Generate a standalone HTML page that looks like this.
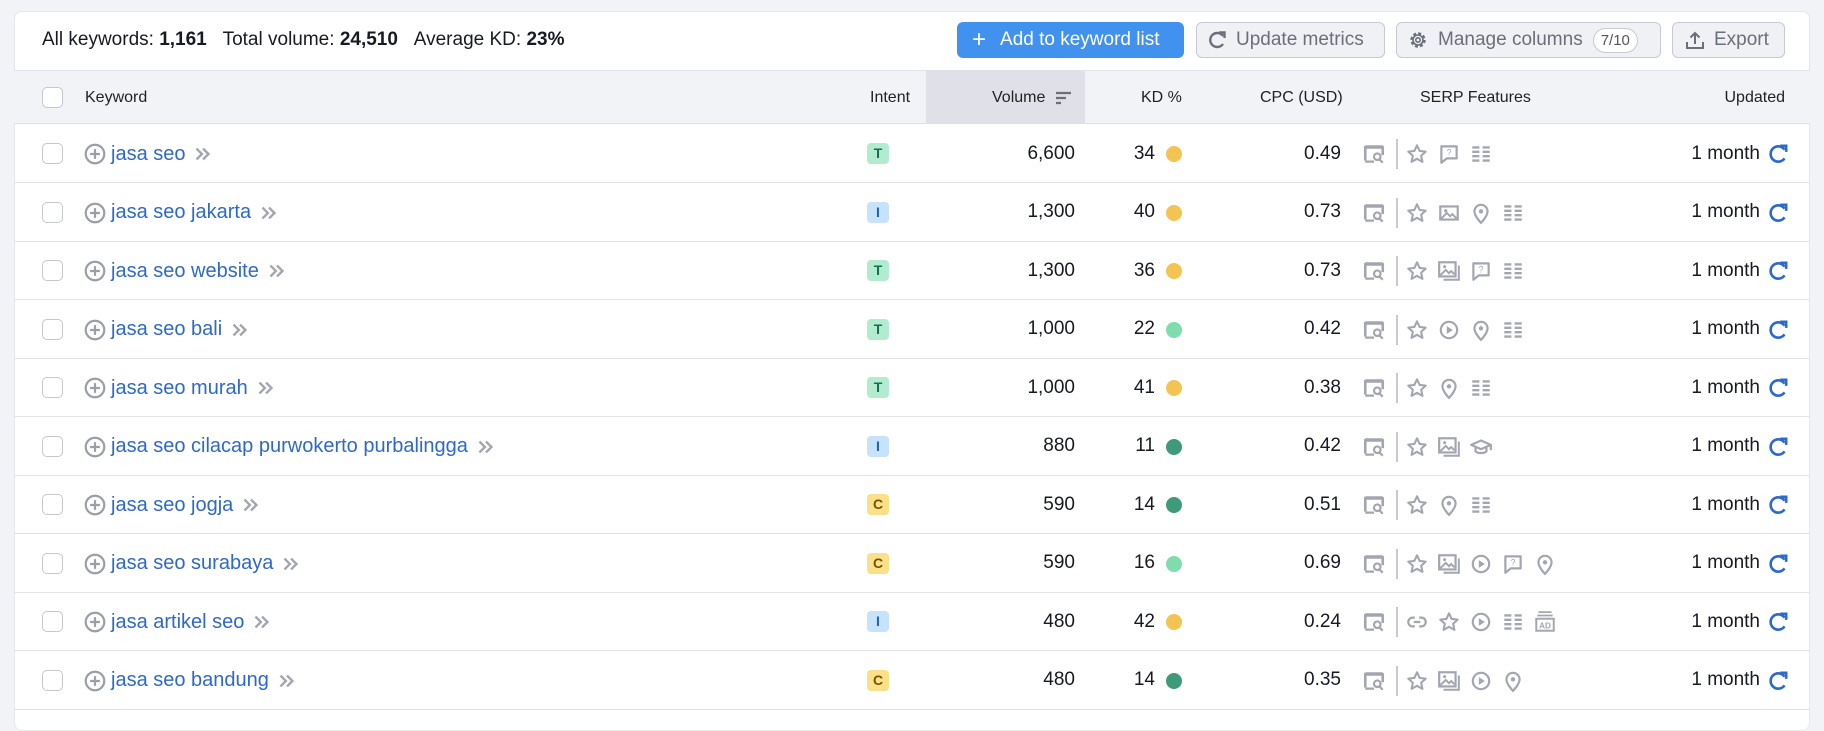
<!DOCTYPE html>
<html><head><meta charset="utf-8"><style>
*{box-sizing:border-box;margin:0;padding:0}
body{width:1824px;height:724px;background:#f2f3f7;font-family:"Liberation Sans",Arial,sans-serif;color:#171a22;position:relative;overflow:hidden}
.card{position:absolute;left:14px;top:11px;width:1796px;height:720px;background:#fff;border-radius:8px;border:1px solid #e6e7ee}
.a{position:absolute;white-space:nowrap}
.tb{top:29px;font-size:19px;left:42px}
.btn{position:absolute;top:22px;height:36px;border:1px solid #c8cad2;border-radius:6px;background:#f0f1f4;color:#6c6e79;font-size:19px;display:flex;align-items:center}
.hdr{position:absolute;left:14px;top:70px;width:1796px;height:54px;background:#f2f3f7;border-top:1px solid #e0e2ea;border-bottom:1px solid #dedfe8}
.hc{position:absolute;top:89px;font-size:16px;color:#222}
.cb{position:absolute;width:21px;height:21px;border:1px solid #c5c7d0;border-radius:5px;background:#fff}
.row{position:absolute;left:14px;width:1796px;height:1px;background:#e2e3ea}
.kw{position:absolute;font-size:20px;color:#2d69cc;line-height:24px;white-space:nowrap}
.num{position:absolute;font-size:19px;text-align:right;line-height:24px;white-space:nowrap}
.badge{position:absolute;width:22px;height:21px;border-radius:4px;font-size:14px;font-weight:bold;text-align:center;line-height:21px}
.dot{position:absolute;width:16px;height:16px;border-radius:50%}
svg.i{position:absolute;width:24px;height:24px}
</style></head><body>
<svg width="0" height="0" style="position:absolute">
<defs>
<symbol id="sq" viewBox="0 0 22 22"><path d="M3 17V5h16v7" fill="none" stroke="#a3a6b0" stroke-width="2.4"/><path d="M3 4h16" stroke="#a3a6b0" stroke-width="2"/><circle cx="14" cy="13.5" r="3" fill="none" stroke="#a3a6b0" stroke-width="2"/><path d="M16 16l3 3M3 18h8" stroke="#a3a6b0" stroke-width="2"/></symbol>
<symbol id="star" viewBox="0 0 22 22"><path d="M11 3l2.4 5.2 5.6.6-4.2 3.8 1.2 5.6L11 15.4 6 18.2l1.2-5.6L3 8.8l5.6-.6z" fill="none" stroke="#a3a6b0" stroke-width="1.9" stroke-linejoin="round"/></symbol>
<symbol id="qa" viewBox="0 0 22 22"><path d="M4 4h14v11H9l-5 4z" fill="none" stroke="#a3a6b0" stroke-width="2" stroke-linejoin="round"/><text x="11" y="12.5" font-size="8" text-anchor="middle" fill="#a3a6b0" font-family="Liberation Sans">?</text></symbol>
<symbol id="list" viewBox="0 0 22 22"><path d="M3 5h6.5M12.5 5H19M3 9h6.5M12.5 9H19M3 13h6.5M12.5 13H19M3 17h6.5M12.5 17H19" stroke="#a3a6b0" stroke-width="2.2"/></symbol>
<symbol id="img" viewBox="0 0 22 22"><rect x="3" y="5" width="16" height="12" fill="none" stroke="#a3a6b0" stroke-width="2"/><path d="M4 16l5-5 3 3 2-2 4 4" fill="none" stroke="#a3a6b0" stroke-width="1.8"/><circle cx="8" cy="9" r="1.5" fill="#a3a6b0"/></symbol>
<symbol id="imgs" viewBox="0 0 22 22"><rect x="2" y="3" width="15" height="13" fill="none" stroke="#a3a6b0" stroke-width="2"/><path d="M3 15l5-5 3 3 2-2 3 3M20 6v13H6" fill="none" stroke="#a3a6b0" stroke-width="1.8"/><circle cx="7" cy="7" r="1.4" fill="#a3a6b0"/></symbol>
<symbol id="pin" viewBox="0 0 22 22"><path d="M11 20s-6-6-6-10.5a6 6 0 0112 0C17 14 11 20 11 20z" fill="none" stroke="#a3a6b0" stroke-width="2"/><circle cx="11" cy="9.5" r="2" fill="#a3a6b0"/></symbol>
<symbol id="play" viewBox="0 0 22 22"><circle cx="11" cy="11" r="7.5" fill="none" stroke="#a3a6b0" stroke-width="2"/><path d="M9 7.5v7l5.5-3.5z" fill="#a3a6b0"/></symbol>
<symbol id="cap" viewBox="0 0 22 22"><path d="M2 9l9-4 9 4-9 4z" fill="none" stroke="#a3a6b0" stroke-width="2" stroke-linejoin="round"/><path d="M6 11v4c2 2 8 2 10 0v-4M20 9v5" fill="none" stroke="#a3a6b0" stroke-width="2"/></symbol>
<symbol id="link" viewBox="0 0 22 22"><path d="M9 7H7a4 4 0 000 8h2M13 7h2a4 4 0 010 8h-2M8 11h6" fill="none" stroke="#a3a6b0" stroke-width="2"/></symbol>
<symbol id="ad" viewBox="0 0 22 22"><path d="M5 2h12M4 5h14" stroke="#a3a6b0" stroke-width="1.6"/><rect x="3" y="8" width="16" height="11" fill="none" stroke="#a3a6b0" stroke-width="1.8"/><text x="11" y="17" font-size="7.5" font-weight="bold" text-anchor="middle" fill="#a3a6b0" font-family="Liberation Sans">AD</text></symbol>
<symbol id="plus" viewBox="0 0 22 22"><circle cx="11" cy="11" r="8.5" fill="none" stroke="#9b9ea8" stroke-width="2"/><path d="M11 6.5v9M6.5 11h9" stroke="#9b9ea8" stroke-width="2"/></symbol>
<symbol id="chev" viewBox="0 0 22 22"><path d="M5 6l5 5-5 5M11 6l5 5-5 5" fill="none" stroke="#a3a6b0" stroke-width="2.2"/></symbol>
<symbol id="ref" viewBox="0 0 22 22"><path d="M17 7a7 7 0 100 8" fill="none" stroke="#2d69cc" stroke-width="2.4"/><path d="M13 3.5h5.5V9" fill="none" stroke="#2d69cc" stroke-width="2.4"/></symbol>
</defs></svg>
<div class="card"></div>
<div class="a tb">All keywords: <b>1,161</b>&nbsp;&nbsp;&nbsp;Total volume: <b>24,510</b>&nbsp;&nbsp;&nbsp;Average KD: <b>23%</b></div>
<div class="btn" style="left:957px;width:227px;background:#4192ef;border-color:#4192ef;color:#fff"><span style="font-size:24px;margin:0 14px 0 14px;line-height:1">+</span>Add to keyword list</div>
<div class="btn" style="left:1196px;width:189px"><svg width="22" height="22" style="margin:0 8px 0 9px"><path d="M17 7a7 7 0 100 8" fill="none" stroke="#6c6e79" stroke-width="2.4"/><path d="M13 3.5h5.5V9" fill="none" stroke="#6c6e79" stroke-width="2.4"/></svg>Update metrics</div>
<div class="btn" style="left:1396px;width:265px"><svg width="22" height="22" style="margin:0 9px 0 10px"><circle cx="11" cy="11" r="6.5" fill="none" stroke="#6c6e79" stroke-width="2.4" stroke-dasharray="3 2.1"/><circle cx="11" cy="11" r="5" fill="none" stroke="#6c6e79" stroke-width="1.6"/><circle cx="11" cy="11" r="2.2" fill="none" stroke="#6c6e79" stroke-width="1.6"/></svg>Manage columns<span style="margin-left:10px;border:1px solid #c8cad2;background:#fff;border-radius:14px;padding:3px 7px;font-size:15px;color:#555">7/10</span></div>
<div class="btn" style="left:1672px;width:113px"><svg width="22" height="22" style="margin:0 8px 0 11px"><path d="M11 15V4M6.5 8.5L11 4l4.5 4.5M3 13v6h16v-6" fill="none" stroke="#6c6e79" stroke-width="2"/></svg>Export</div>
<div class="hdr"></div>
<div class="a" style="left:926px;top:71px;width:159px;height:53px;background:#dfe0e8"></div>
<div class="cb" style="left:42px;top:87px"></div>
<div class="hc" style="left:85px">Keyword</div>
<div class="hc" style="left:870px">Intent</div>
<div class="hc" style="left:992px">Volume</div>
<svg class="i" style="left:1053px;top:88px"><path d="M3 5h15M3 10h10M3 15h5" stroke="#6c6e79" stroke-width="2.2"/></svg>
<div class="hc" style="left:1141px">KD %</div>
<div class="hc" style="left:1260px">CPC (USD)</div>
<div class="hc" style="left:1420px">SERP Features</div>
<div class="hc" style="right:39px">Updated</div>
<div id="rows"></div>
<script>
const D=[
["jasa seo","T","6,600","34","y","0.49",["star","qa","list"]],
["jasa seo jakarta","I","1,300","40","y","0.73",["star","img","pin","list"]],
["jasa seo website","T","1,300","36","y","0.73",["star","imgs","qa","list"]],
["jasa seo bali","T","1,000","22","l","0.42",["star","play","pin","list"]],
["jasa seo murah","T","1,000","41","y","0.38",["star","pin","list"]],
["jasa seo cilacap purwokerto purbalingga","I","880","11","d","0.42",["star","imgs","cap"]],
["jasa seo jogja","C","590","14","d","0.51",["star","pin","list"]],
["jasa seo surabaya","C","590","16","l","0.69",["star","imgs","play","qa","pin"]],
["jasa artikel seo","I","480","42","y","0.24",["link","star","play","list","ad"]],
["jasa seo bandung","C","480","14","d","0.35",["star","imgs","play","pin"]]];
const bc={T:["#b2ecd0","#13704a"],I:["#c7e2fb","#1f63b5"],C:["#fbe08a","#735400"]};
const dc={y:"#f4c453",l:"#7fdcab",d:"#3e9a78"};
const m=document.createElement('canvas').getContext('2d');m.font='20px "Liberation Sans"';
let h='';
D.forEach((r,i)=>{const t=124+58.5*i,c=t+29,y=c-11.5;
h+=`<div class="row" style="top:${t+58}px"></div>`;
h+=`<div class="cb" style="left:42px;top:${c-10}px"></div>`;
h+=`<svg class="i" style="left:83px;top:${c-11}px"><use href="#plus"/></svg>`;
h+=`<div class="kw" style="left:111px;top:${y}px">${r[0]}</div>`;
const w=m.measureText(r[0]).width;
h+=`<svg class="i" style="left:${111+w+6}px;top:${c-11}px"><use href="#chev"/></svg>`;
h+=`<div class="badge" style="left:867px;top:${c-10}px;background:${bc[r[1]][0]};color:${bc[r[1]][1]}">${r[1]}</div>`;
h+=`<div class="num" style="right:${1824-1075}px;top:${y}px">${r[2]}</div>`;
h+=`<div class="num" style="right:${1824-1155}px;top:${y}px">${r[3]}</div>`;
h+=`<div class="dot" style="left:1166px;top:${c-7}px;background:${dc[r[4]]}"></div>`;
h+=`<div class="num" style="right:${1824-1341}px;top:${y}px">${r[5]}</div>`;
h+=`<svg class="i" style="left:1362px;top:${c-11}px"><use href="#sq"/></svg>`;
h+=`<div class="a" style="left:1396px;top:${c-14}px;width:2px;height:30px;background:#c8cad2"></div>`;
r[6].forEach((s,k)=>{h+=`<svg class="i" style="left:${1405+k*32}px;top:${c-11}px"><use href="#${s}"/></svg>`;});
h+=`<div class="num" style="right:${1824-1760}px;top:${y}px">1 month</div>`;
h+=`<svg class="i" style="left:1766px;top:${c-11}px"><use href="#ref"/></svg>`;
});
document.getElementById('rows').innerHTML=h;
</script>
</body></html>
